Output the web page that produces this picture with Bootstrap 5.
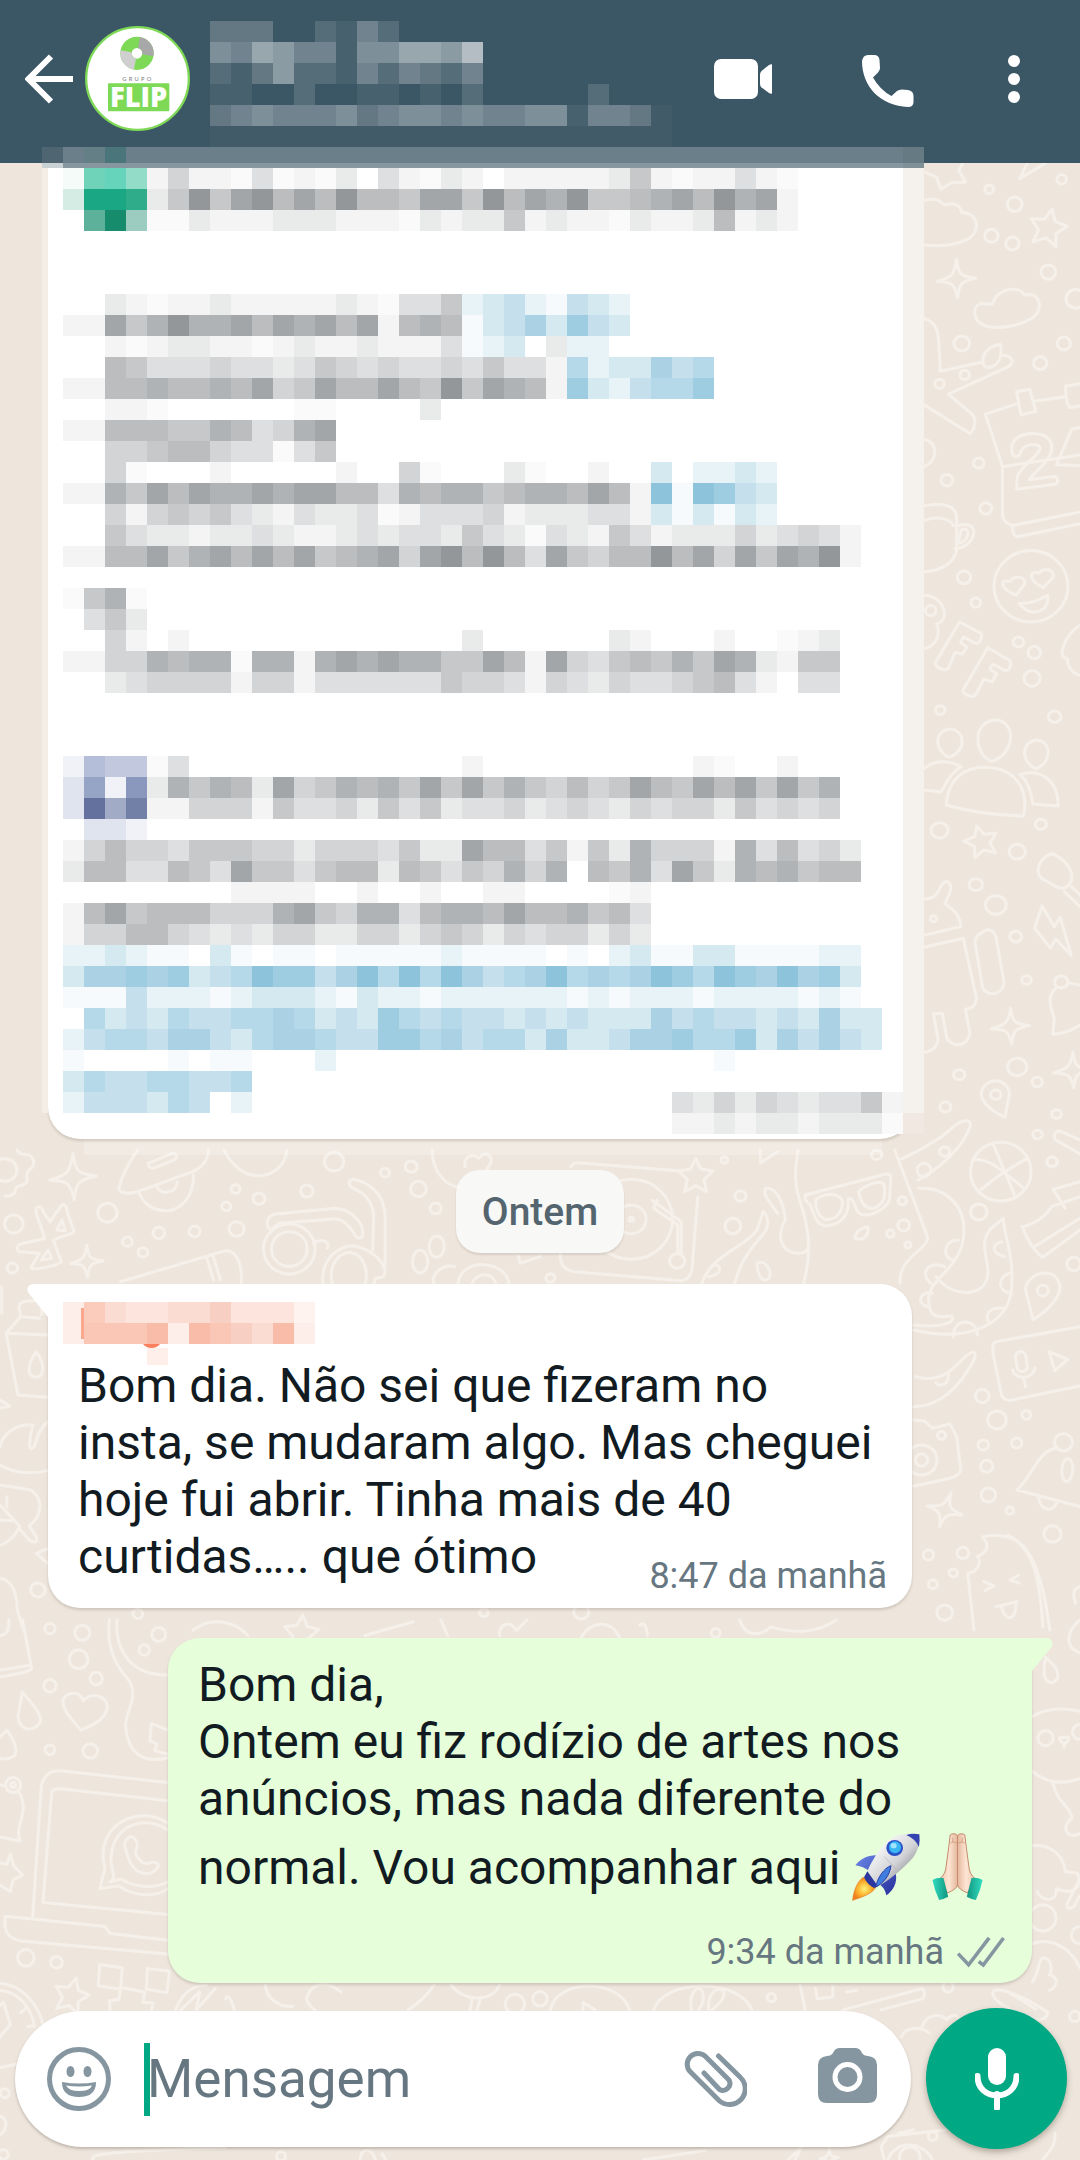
<!DOCTYPE html>
<html lang="pt-BR">
<head>
<meta charset="utf-8">
<meta name="viewport" content="width=device-width, initial-scale=1">
<title>Grupo Flip</title>
<link href="https://cdn.jsdelivr.net/npm/bootstrap@5.3.0/dist/css/bootstrap.min.css" rel="stylesheet">
<style>
  body{font-family:Roboto,"Noto Sans",sans-serif;background:#eee6dd;color:#111b21;position:relative;overflow-x:hidden}
  .wallpaper{position:absolute;inset:0;width:100%;height:100%;z-index:-1}
  .wallpaper g{fill:none;stroke:#f6f0ea;stroke-width:3px;stroke-linecap:round;stroke-linejoin:round}
  .wallpaper g *{vector-effect:non-scaling-stroke}
  .topbar{background:#3b5664;padding:26px 56px 32px 25px}
  .topbar .btn,.composer .btn{line-height:0;border:0}
  .topbar-actions{gap:90px}
  .title-block{margin:-5px 0 -16px 20px;width:462px}
  .avatar-btn{margin-left:12px}
  .thread{padding:0 48px 25px}
  .bubble{position:relative;width:864px;max-width:100%;border-radius:32px;box-shadow:0 2px 3px rgba(60,45,30,.18);font-size:48px;line-height:57px}
  .bubble-in{background:#fff;padding:18px 25px 12px 30px}
  .bubble-out{background:#e6ffda;padding:18px 26px 11px 30px}
  .bubble-forward{padding:0 0 5px;border-top-left-radius:0;border-top-right-radius:0}
  .tail-left{border-top-left-radius:0}
  .tail-right{border-top-right-radius:0}
  .tail{position:absolute;top:0}
  .tail-left .tail{left:-21px}
  .tail-right .tail{right:-21px}
  .long-text{width:882px;margin:-16px -12px 0 -6px;position:relative;z-index:1}
  .sender{margin:0 0 -8px -15px}
  .stamp{font-size:36px;line-height:40px;color:#667781}
  .stamp-inline{margin-top:-29px}
  .stamp-below{margin-top:31px;gap:12px}
  .emoji{vertical-align:-17px;margin-top:6px}
  .day-pill{background:#f8f8f7;color:#54656f;font-size:39px;line-height:47px;font-weight:500;border-radius:24px;padding:19px 26px 17px;margin:31px 0;box-shadow:0 2px 2px rgba(60,45,30,.12)}
  .reply-gap{margin-top:30px}
  .composer{padding:0 13px 11px 15px;gap:15px}
  .field{height:136px;border-radius:68px;background:#fff;padding:0 34px 0 32px;box-shadow:0 2px 3px rgba(60,45,30,.25)}
  .field input{font-size:53px;line-height:64px;color:#111b21;caret-color:#00a884}
  .field input::placeholder{color:#667781;opacity:1}
  .input-wrap{position:relative;margin-left:36px}
  .caret{position:absolute;left:-3px;top:-4px;width:6px;height:73px;background:#00a884}
  .clip-btn{margin-right:71px}
  .mic-btn{width:141px;height:141px;background:#00a884;box-shadow:0 3px 6px rgba(60,45,30,.35)}
  .mic-btn:hover{background:#00a884}
</style>
<script src="https://cdn.jsdelivr.net/npm/bootstrap@5.3.0/dist/js/bootstrap.bundle.min.js"></script>
</head>
<body class="d-flex flex-column min-vh-100">

<svg class="wallpaper" viewBox="0 0 1080 2160" preserveAspectRatio="xMidYMin slice" aria-hidden="true">
  <defs>
    <path id="star" vector-effect="non-scaling-stroke" d="M0-50L15-18 50-12 24 14 32 50 0 32-32 50-24 14-50-12-15-18Z"/>
    <path id="spark" vector-effect="non-scaling-stroke" d="M0-55C5-12 12-8 52-3 12 6 6 12 3 52-6 14-10 8-52 6-10-6-6-14 0-55Z"/>
  </defs>
  <g transform="translate(500 140) scale(.37 .357)">
    <path d="M1150 90L1180 105 1192 138 1220 120 1258 118 1240 85 1262 45M1405 108L1425 65M1405 108L1490 55M1146 170C1175 160 1190 168 1200 182 1235 170 1245 190 1248 203 1300 205 1300 265 1255 282 1220 298 1180 298 1146 294"/>
    <use href="#star" transform="translate(1482 243) rotate(12)"/><use href="#spark" transform="translate(1234 390)"/>
    <path d="M1330 460C1345 415 1400 405 1418 435 1455 425 1465 460 1452 485 1430 515 1350 535 1310 520 1275 505 1275 460 1305 458ZM1146 500C1180 510 1185 540 1186 570L1190 648 1306 622C1300 595 1330 575 1352 572 1360 610 1345 630 1325 637 1308 638 1305 630 1306 622M1352 604C1385 600 1395 625 1370 637L1212 712 1278 770C1290 790 1280 815 1270 822L1146 742M1312 768L1395 740M1448 731L1528 719M1568 745L1540 750C1528 740 1530 700 1528 690L1568 682M1312 768L1358 915V1050C1360 1070 1375 1078 1390 1080M1358 915L1568 882M1385 1080L1568 1042M1385 1080C1385 1100 1390 1115 1405 1110L1568 1075M1396 705L1432 698 1448 760 1408 770Z"/>
    <path d="M1385 880C1375 840 1405 822 1440 822 1480 822 1500 845 1488 880 1478 905 1450 925 1430 952L1500 942C1510 950 1510 960 1500 964L1396 978 1398 945C1405 915 1450 890 1460 865 1460 845 1410 850 1405 880 1400 890 1388 888 1385 880ZM1568 805L1545 810 1504 910 1568 912M1146 1025C1200 1012 1240 1025 1234 1070V1150C1225 1190 1190 1205 1146 1210M1146 1065C1190 1050 1220 1065 1225 1080M1240 1080C1300 1060 1290 1140 1230 1145M1246 1092C1275 1080 1270 1125 1238 1130ZM1146 838C1185 845 1185 900 1146 915"/>
    <circle cx="1435" cy="1250" r="100"/><path d="M1395 1275C1350 1255 1350 1230 1378 1236 1385 1220 1425 1220 1417 1245ZM1468 1254C1425 1230 1430 1205 1457 1213 1465 1198 1500 1200 1495 1225ZM1402 1298Q1440 1300 1480 1275C1485 1310 1460 1325 1435 1322 1420 1318 1410 1305 1402 1298ZM1242 1350L1300 1382C1305 1395 1295 1412 1285 1410L1252 1392 1245 1408 1262 1420 1250 1440 1230 1435 1212 1480C1200 1490 1175 1475 1176 1465ZM1318 1422L1378 1458C1384 1475 1375 1488 1365 1486L1332 1468 1324 1482 1342 1495 1330 1518 1308 1510 1285 1555C1270 1565 1250 1550 1252 1540ZM1146 1275C1200 1275 1220 1345 1180 1355 1195 1395 1170 1420 1146 1425M1568 1360C1540 1375 1515 1420 1520 1445L1535 1455C1530 1475 1550 1495 1568 1500"/>
    <circle cx="1391" cy="180" r="20"/><circle cx="1328" cy="268" r="18"/><circle cx="1385" cy="290" r="18"/><circle cx="1322" cy="138" r="12"/><circle cx="1518" cy="110" r="13"/><circle cx="1482" cy="370" r="20"/><circle cx="1556" cy="445" r="26"/><circle cx="1248" cy="570" r="21"/><circle cx="1524" cy="570" r="18"/><circle cx="1460" cy="625" r="18"/><circle cx="1188" cy="683" r="13"/><circle cx="1256" cy="658" r="13"/><circle cx="1294" cy="905" r="14"/><circle cx="1208" cy="953" r="16"/><circle cx="1313" cy="1032" r="16"/><circle cx="1254" cy="1225" r="18"/><circle cx="1286" cy="1296" r="13"/><circle cx="1401" cy="1406" r="14"/><circle cx="1444" cy="1436" r="17"/><circle cx="1438" cy="1508" r="22"/><circle cx="1164" cy="1318" r="14"/>
  </g>
  <g transform="translate(500 700) scale(.37 .3333)">
    <path d="M1338 60C1395 60 1395 160 1330 184 1280 165 1275 65 1338 60ZM1216 87C1260 90 1260 155 1214 172 1170 150 1175 90 1216 87ZM1450 120C1495 125 1490 190 1448 207 1405 180 1410 125 1450 120ZM1206 315C1210 240 1250 202 1312 202 1390 205 1430 260 1415 348Q1300 345 1206 315ZM1146 205C1180 175 1220 185 1246 200 1215 220 1205 255 1192 276L1146 270M1405 224C1460 205 1510 240 1508 318L1440 312C1435 270 1425 240 1405 224ZM1465 618L1445 685 1488 744 1502 717 1544 766 1514 652 1498 680ZM1300 700C1320 680 1338 690 1342 720L1362 845C1360 890 1310 890 1304 860L1284 730C1284 715 1290 705 1300 700ZM1146 597C1175 595 1180 585 1190 562 1205 530 1225 545 1215 580L1202 612C1230 630 1245 655 1245 680L1146 706M1146 742L1252 715 1288 895C1285 920 1275 925 1258 928L1270 1000C1260 1050 1210 1040 1206 1005L1196 940 1172 942 1184 1020C1180 1045 1165 1055 1146 1056M1490 460C1450 480 1440 530 1480 545 1515 570 1530 575 1545 540 1550 500 1515 470 1490 460ZM1525 575L1568 620M1545 560L1568 585"/>
    <circle cx="1517" cy="846" r="18"/><path d="M1502 865C1475 890 1490 925 1498 955L1494 1002C1520 1005 1545 990 1568 975M1534 848L1568 855"/>
    <use href="#spark" transform="translate(1380 980)"/><use href="#spark" transform="translate(1548 1112)"/><use href="#star" transform="translate(1300 422) rotate(-15) scale(.9)"/>
    <path d="M1365 1252C1320 1230 1300 1200 1300 1180 1310 1130 1370 1130 1377 1180ZM1080 1380C1140 1350 1200 1310 1225 1280 1250 1260 1270 1255 1272 1275 1250 1350 1180 1410 1130 1440M1510 1292L1568 1320M1510 1292C1495 1300 1495 1315 1505 1322L1568 1362"/>
    <circle cx="1340" cy="1184" r="14"/><circle cx="1188" cy="391" r="23"/><circle cx="1398" cy="455" r="22"/><circle cx="1462" cy="373" r="15"/><circle cx="1286" cy="554" r="18"/><circle cx="1340" cy="615" r="28"/><circle cx="1394" cy="710" r="16"/><circle cx="1172" cy="656" r="9"/><circle cx="1423" cy="840" r="13"/><circle cx="1398" cy="1101" r="26"/><circle cx="1241" cy="1124" r="15"/><circle cx="1452" cy="1146" r="14"/><circle cx="1204" cy="1221" r="15"/><circle cx="1504" cy="1242" r="13"/><circle cx="1453" cy="1304" r="13"/><circle cx="1190" cy="30" r="13"/><circle cx="1499" cy="50" r="17"/><circle cx="1492" cy="1385" r="14"/><circle cx="1202" cy="1355" r="14"/><circle cx="1018" cy="1365" r="14"/>
  </g>
  <g transform="translate(0 1150) scale(.3444 .3333)">
    <circle cx="15" cy="60" r="34"/><path d="M50 0C60 20 75 10 85 15 100 25 105 45 85 60 70 70 85 95 75 100 60 110 45 105 45 120 45 135 25 140 15 138"/>
    <use href="#spark" transform="translate(212 82) scale(1.3)"/><use href="#spark" transform="translate(252 335) scale(.9)"/>
    <path d="M345 115C355 70 385 20 400 0M345 115C350 135 375 130 400 125L560 65C590 50 605 25 605 0M430 40L500 10C515 10 515 25 505 30L445 55C432 55 430 45 430 40ZM405 130C430 205 560 210 562 75M455 110C465 135 510 135 515 95M650 0C670 40 700 75 750 78 800 75 830 40 833 0M1255 0C1255 60 1290 110 1340 112M1350 50C1345 15 1380 10 1390 25 1410 0 1430 15 1425 40L1395 85"/>
    <path d="M105 175C115 165 125 175 125 185L145 215 180 165C190 160 195 175 195 185L215 245C210 255 195 250 155 270L178 335C170 345 95 365 90 352L115 310 55 305C45 295 50 285 60 282L130 265 105 190ZM165 240L180 210 190 242ZM120 330L140 300 150 325Z"/>
    <circle cx="840" cy="297" r="75"/><circle cx="840" cy="297" r="52"/><path d="M910 280C940 260 960 280 950 295M938 402C930 330 980 290 1020 287 1070 290 1110 330 1118 360 1120 385 1105 382 1090 385L1085 402M965 402C950 340 990 305 1020 308 1060 315 1070 370 1060 402M780 235C770 215 780 195 800 192L975 175C1030 180 1060 230 1052 258 1045 270 1030 262 1028 250 1010 220 990 205 970 207L810 220 785 240M1082 300L1085 190C1075 140 1050 125 1020 112 1005 95 1020 85 1035 90 1090 105 1118 150 1118 200V350M350 395L655 302C690 300 705 350 700 402M600 322L620 390M618 315L640 390"/>
    <ellipse cx="1268" cy="290" rx="22" ry="32"/><ellipse cx="1220" cy="335" rx="22" ry="34"/><path d="M1260 400C1250 370 1290 340 1320 350M1330 400C1340 320 1470 330 1478 402M1370 402C1385 365 1430 365 1440 402M1505 318L1510 340 1568 320"/>
    <path d="M0 410L5 415V490M60 500L55 470C60 450 75 455 100 452L115 455C120 470 125 485 120 495M60 500L18 550 52 735 139 742M60 500L115 505M18 550L139 555M105 605C75 650 80 680 105 682 130 680 130 640 105 605ZM0 750L28 768 0 775M139 815C120 830 110 850 100 890 85 905 80 895 95 825 40 820 5 860 0 890M0 945C30 965 80 975 139 962M0 1005L90 1020C130 1050 120 1100 85 1128L105 1160C110 1178 100 1180 85 1170L55 1135C40 1165 10 1185 0 1185M0 1065L58 1130M0 1110L35 1112M20 1070V1040M139 1195L105 1210 139 1240M0 1285C40 1290 50 1340 50 1380L68 1440"/>
    <circle cx="312" cy="188" r="28"/><circle cx="40" cy="222" r="27"/><circle cx="36" cy="354" r="15"/><circle cx="370" cy="275" r="14"/><circle cx="415" cy="307" r="14"/><circle cx="461" cy="249" r="17"/><circle cx="565" cy="244" r="16"/><circle cx="687" cy="237" r="22"/><circle cx="657" cy="169" r="13"/><circle cx="684" cy="117" r="13"/><circle cx="752" cy="146" r="17"/><circle cx="891" cy="123" r="18"/><circle cx="970" cy="35" r="28"/><circle cx="1118" cy="68" r="13"/><circle cx="1194" cy="50" r="17"/><circle cx="1215" cy="117" r="23"/><circle cx="1265" cy="175" r="16"/><circle cx="110" cy="1320" r="21"/><circle cx="400" cy="1392" r="14"/><circle cx="1405" cy="1388" r="12"/>
  </g>
  <g transform="translate(540 1150) scale(.3444 .3333)">
    <path d="M60 310C55 340 70 360 100 365L410 392C430 390 440 375 442 350L458 140M90 50C95 35 110 38 130 40L400 62M640 0V38L690 5M750 0C740 60 735 100 760 170 785 250 785 330 765 400M470 400C500 310 600 290 630 240L648 185C665 200 665 230 650 250 590 320 580 350 565 400M655 115C690 110 710 170 712 210 680 270 710 320 765 308 785 300 780 280 778 260M655 115C645 135 670 160 690 190M630 340C660 325 680 380 660 388 640 400 630 360 630 340M500 345C530 340 530 375 490 380"/>
    <circle cx="265" cy="208" r="120"/><circle cx="265" cy="208" r="43"/><circle cx="265" cy="208" r="6"/><circle cx="398" cy="333" r="22"/><path d="M325 150L410 215V310M340 150L330 175 400 225V310"/><use href="#star" transform="translate(452 75)"/>
    <path d="M770 135L1005 72C1020 70 1020 80 1018 90L1015 150C1005 180 930 220 918 175 905 135 890 140 895 160 895 200 870 225 830 228 800 225 795 190 785 165L770 150ZM800 150C830 125 880 130 878 160 875 200 850 210 825 208 805 195 800 170 800 150ZM925 125C950 100 1000 85 1000 110 1003 140 1000 160 970 175 940 180 930 150 925 125ZM915 265C915 245 935 230 953 232 955 255 940 275 915 265Z"/>
    <circle cx="1338" cy="65" r="88"/><path d="M1255 30C1300 20 1340 60 1405 115M1280 120Q1320 80 1415 25M1315 -20L1380 140"/>
    <path d="M1030 0L1125 260C1130 300 1040 320 1045 400M1100 115C1180 110 1240 170 1230 260 1220 360 1130 380 1128 450 1130 500 1150 505 1195 498 1210 515 1170 535 1085 525M1150 380C1200 450 1300 440 1300 370 1305 330 1270 280 1310 235L1345 205C1345 250 1380 320 1368 430 1350 520 1250 580 1085 540M1175 350C1130 330 1100 370 1135 400M1215 270C1180 265 1160 320 1200 330M1340 275C1310 285 1310 310 1350 320M1365 370C1330 375 1325 425 1368 430M1345 475C1300 470 1290 500 1305 520M1200 560C1200 500 1270 505 1270 555M1140 430C1105 420 1090 460 1125 470M1568 95L1490 118 1525 175M1400 230C1430 225 1470 200 1485 170L1568 140M1400 230C1420 280 1440 310 1460 322L1568 240M1435 290L1568 205M1510 410C1500 340 1410 370 1410 420L1432 510C1460 490 1510 450 1510 410ZM1568 530L1325 575C1310 580 1315 600 1316 615L1340 735C1345 750 1360 752 1370 750L1568 708M1090 680C1150 700 1190 670 1230 625 1260 595 1270 605 1260 630 1220 710 1160 770 1085 770M1150 698C1160 715 1190 700 1185 672"/>
    <circle cx="1460" cy="422" r="16"/><rect x="1383" y="605" width="30" height="60" rx="15" transform="rotate(-8 1398 635)"/><path d="M1372 660C1380 690 1430 690 1437 655M1405 685L1410 710M1478 605L1532 628 1495 662Z"/>
    <path d="M1085 810L1115 812 1140 835 1190 822 1210 860 1222 960C1215 985 1190 985 1085 1008"/><circle cx="1108" cy="930" r="45"/><circle cx="1108" cy="930" r="18"/><circle cx="1166" cy="856" r="12"/>
    <circle cx="1520" cy="877" r="26"/><path d="M1495 895C1440 910 1430 980 1385 1020L1568 1070M1530 925C1510 940 1510 990 1530 995 1550 985 1555 930 1530 925ZM1448 1045C1455 1085 1490 1085 1500 1060M1242 1270C1270 1270 1285 1230 1270 1220 1310 1200 1300 1180 1285 1160 1400 1140 1450 1200 1480 1440M1242 1270L1260 1440M1360 1155C1420 1190 1450 1250 1460 1430M1288 1295L1318 1308 1292 1322M1390 1275L1365 1290 1392 1300M1325 1370L1385 1355M1340 1370C1350 1420 1385 1410 1382 1360M1568 1310C1550 1315 1545 1330 1555 1360"/>
    <use href="#spark" transform="translate(1175 1080) rotate(20)"/>
    <circle cx="582" cy="138" r="16"/><circle cx="560" cy="228" r="23"/><circle cx="535" cy="30" r="10"/><circle cx="1052" cy="152" r="12"/><circle cx="1056" cy="226" r="17"/><circle cx="1017" cy="251" r="11"/><circle cx="1068" cy="285" r="9"/><circle cx="1274" cy="186" r="24"/><circle cx="1487" cy="36" r="15"/><circle cx="1115" cy="60" r="20"/><circle cx="1550" cy="342" r="20"/><circle cx="1284" cy="738" r="20"/><circle cx="1327" cy="810" r="27"/><circle cx="1412" cy="795" r="13"/><circle cx="1287" cy="885" r="15"/><circle cx="1384" cy="879" r="15"/><circle cx="1297" cy="949" r="18"/><circle cx="1302" cy="1035" r="21"/><circle cx="1364" cy="1082" r="11"/><circle cx="1488" cy="1152" r="25"/><circle cx="1128" cy="1215" r="15"/><circle cx="1228" cy="1209" r="17"/><circle cx="1200" cy="1269" r="12"/><circle cx="1141" cy="1303" r="13"/><circle cx="1175" cy="1388" r="23"/><circle cx="30" cy="384" r="13"/><circle cx="120" cy="1385" r="22"/>
  </g>
  <g transform="translate(0 1620) scale(.3444)">
    <path d="M65 0L92 140C90 150 60 155 0 165M0 145L85 132M0 45C15 45 30 30 25 0M65 210C110 260 130 290 110 305 80 330 55 310 52 280ZM20 320C50 360 55 395 30 400 15 405 5 405 0 400M0 340L20 320M235 320C210 290 180 260 183 235 190 205 235 205 242 235 260 210 305 215 312 250 308 290 270 305 235 320ZM318 0C310 60 325 120 370 170 410 220 360 270 365 310 370 380 410 420 488 400M340 0C335 50 350 160 488 160M488 320L440 300 435 350 455 360 450 380 488 390M560 30C610 -10 680 0 720 45"/>
    <path d="M95 860L120 480C130 445 150 435 175 438L488 472M125 820L150 500C155 490 165 490 175 490L488 525M125 820L488 855M15 860L95 868 305 890 320 910 488 930M15 860C10 900 20 925 60 932L488 970M290 780L305 720C270 600 400 530 488 590M290 780L345 772C400 810 460 800 488 780M320 760C350 740 300 720 335 640 360 590 430 570 488 610M320 760L350 752C400 780 450 780 488 760M365 665C355 640 380 615 395 640 410 665 375 670 410 700 430 720 440 690 460 710 455 740 420 740 400 730 380 715 370 690 365 665Z"/>
    <circle cx="38" cy="479" r="22"/><circle cx="38" cy="479" r="7"/><path d="M0 478L16 482M55 500C90 560 40 590 58 642L0 630M0 705L20 710 30 680 40 715 65 740 38 755 30 788 0 770"/>
    <path d="M290 1000L355 1010 350 1072 285 1062ZM428 1012L492 1020 485 1082 425 1072ZM355 1068L420 1080 415 1110 445 1112 440 1132M350 1072L345 1102 318 1105 320 1132M510 1132C530 1080 560 1060 600 1060M525 1132L580 1080 570 1132 625 1070M655 1100C660 1085 670 1095 680 1132M770 1060C775 1100 810 1125 850 1122M890 1100C900 1060 940 1040 990 1080M890 1100C895 1120 905 1125 915 1132M1185 1132C1220 1110 1240 1090 1260 1060M1310 1060C1350 1110 1430 1110 1450 1060M1365 1132L1370 1105M1385 1132L1395 1100"/>
    <use href="#star" transform="translate(208 1088) rotate(15)"/><use href="#star" transform="translate(875 35) rotate(5)"/>
    <path d="M0 1055C60 1060 110 1110 125 1175M0 1075C50 1080 90 1120 100 1180M0 1120L10 1110 30 1175 0 1210M60 1140L75 1128M80 1180L100 1178M0 1300L45 1290M1060 45L1200 5M1280 0L1300 45M1450 45C1450 10 1480 0 1500 30L1530 0M270 1568C260 1550 290 1545 655 1532M1045 1568C1050 1530 1080 1530 1090 1568M1110 1550L1120 1568M0 1440C25 1450 20 1480 0 1495"/>
    <circle cx="145" cy="25" r="15"/><circle cx="239" cy="37" r="22"/><circle cx="228" cy="114" r="27"/><circle cx="279" cy="170" r="18"/><circle cx="145" cy="191" r="18"/><circle cx="461" cy="42" r="20"/><circle cx="419" cy="87" r="15"/><circle cx="145" cy="377" r="14"/><circle cx="262" cy="380" r="21"/><circle cx="75" cy="981" r="24"/><circle cx="164" cy="994" r="17"/><circle cx="1495" cy="1115" r="28"/><circle cx="14" cy="1374" r="13"/><circle cx="816" cy="1557" r="13"/><circle cx="10" cy="1552" r="14"/>
  </g>
  <g transform="translate(540 1620) scale(.3444)">
    <path d="M120 50C150 0 210 0 230 50M290 15C300 5 308 12 312 45M580 0C600 60 650 40 670 20 740 40 800 40 860 0M1568 0C1530 30 1520 80 1568 95M1468 108C1460 150 1460 180 1485 182 1515 175 1505 140 1480 120ZM1430 280C1470 255 1520 255 1568 265M1430 440C1480 480 1530 475 1568 460M1490 475C1500 530 1540 540 1545 575 1510 600 1530 640 1568 620M1430 655C1480 650 1520 680 1525 730L1560 735C1580 780 1540 800 1500 780 1500 830 1450 810 1445 790M1568 750L1530 825C1530 840 1540 840 1550 832L1568 800M1430 940C1480 920 1540 950 1568 1010M1430 1050C1450 1020 1445 1000 1455 985 1480 970 1490 1010 1480 1030 1510 1040 1500 1065 1480 1075M1315 1080C1330 1060 1420 1100 1475 1140 1470 1160 1450 1165 1430 1155 1350 1130 1310 1100 1315 1080ZM1360 1080L1440 1130"/>
    <path d="M30 1132C50 1040 230 1040 260 1132M125 1132V1110L160 1132M330 1132C360 1040 580 1040 615 1132M440 1132C430 1080 460 1060 470 1075 480 1100 470 1120 460 1132M490 1132C485 1080 520 1060 535 1080 535 1110 510 1120 500 1132M755 1060L770 1132M800 1070L805 1100 850 1095 850 1065M890 1080L920 1075M880 1132L1110 1070C1120 1080 1118 1090 1110 1100L990 1132M1050 1210C1060 1180 1110 1180 1130 1200M1110 1180C1120 1145 1160 1140 1180 1160 1200 1140 1215 1150 1215 1160M1000 1568L990 1530 1010 1500 1180 1480M1010 1568C1030 1510 1110 1510 1140 1568M1040 1490L1085 1480M1495 1490C1500 1530 1470 1550 1460 1568M300 1568L480 1540M720 1568L760 1530 740 1568"/>
    <use href="#spark" transform="translate(840 1562) scale(.5)"/><circle cx="1468" cy="343" r="22"/><circle cx="1568" cy="325" r="22"/><path d="M1522 360C1500 345 1508 335 1522 342 1535 335 1545 345 1522 360V370"/>
    <circle cx="510" cy="38" r="13"/><circle cx="672" cy="1096" r="12"/><circle cx="1460" cy="865" r="38"/><circle cx="1568" cy="915" r="25"/><circle cx="1553" cy="1151" r="15"/><circle cx="1185" cy="1065" r="15"/><circle cx="0" cy="1100" r="21"/><circle cx="1140" cy="1498" r="13"/><circle cx="1074" cy="1560" r="30"/>
  </g>
  <path fill="#fff" fill-opacity=".2" d="M84 1139h798v16H84z"/>
</svg>

<header class="topbar d-flex align-items-center">
  <button type="button" class="btn p-0" aria-label="Voltar">
    <svg width="48" height="50" viewBox="0 0 48 50" fill="none" stroke="#fff" stroke-width="6"><path d="M26 2.500L3.500 25 26 47.500M3 25H48"/></svg>
  </button>
  <button type="button" class="btn p-0 avatar-btn" aria-label="Grupo Flip">
    <svg width="105" height="105" viewBox="45 47 315 315">
      <circle cx="202.500" cy="204.500" r="154" fill="#fff" stroke="#7ed957" stroke-width="7"/>
      <g fill="none" stroke-width="34">
        <circle cx="201" cy="129" r="33" stroke="#7ed957"/>
        <path d="M195 161.500A33 33 0 0 1 168.500 123" stroke="#cfcfcf"/>
        <path d="M207 96.500A33 33 0 0 1 233.500 135" stroke="#a8a8a8"/>
      </g>
      <text x="204" y="213" text-anchor="middle" font-family="Lato,sans-serif" font-size="17" fill="#777" letter-spacing="7">GRUPO</text>
      <rect x="114" y="219" width="184" height="84" rx="3" fill="#7ed957"/>
      <text x="206" y="291" text-anchor="middle" font-family="Open Sans,sans-serif" font-weight="800" font-size="82" fill="#fff">FLIP</text>
    </svg>
  </button>
  <svg class="title-block flex-shrink-0" height="126" viewBox="0 0 462 126" shape-rendering="crispEdges" id="titleBlock" aria-hidden="true"></svg>
  <div class="topbar-actions d-flex align-items-center ms-auto">
    <button type="button" class="btn p-0" aria-label="Chamada de vídeo">
      <svg width="60" height="44" viewBox="0 0 60 44" fill="#fff"><rect x="2" y="2" width="44" height="40" rx="7"/><path d="M48 17.500Q48 15.500 49.500 14L57 8Q61 6 61 10V34Q61 38 57 36L49.500 30.500Q48 29 48 27Z"/></svg>
    </button>
    <button type="button" class="btn p-0" aria-label="Ligar">
      <svg width="52" height="56" viewBox="0 0 52 56" fill="#fff"><path d="M6 4H12Q17 4 17.500 9L18 17Q18 19.500 16 21.500L11 26.500Q18 39 29.500 45L35 40Q37 38.500 40 38.500L46 39Q51.500 40 51.500 45V51Q51.500 56 46 56C19 55 0 36 0 10Q1 4 6 4Z"/></svg>
    </button>
    <button type="button" class="btn p-0" aria-label="Mais opções">
      <svg width="20" height="52" viewBox="0 0 20 52" fill="#fff"><circle cx="10" cy="8" r="6"/><circle cx="10" cy="26" r="6"/><circle cx="10" cy="44" r="6"/></svg>
    </button>
  </div>
</header>

<main class="thread flex-grow-1 d-flex flex-column">
  <article class="bubble bubble-in bubble-forward align-self-start">
    <svg class="long-text d-block" height="987" viewBox="42 147 882 987" shape-rendering="crispEdges" id="longText" aria-hidden="true"></svg>
  </article>

  <div class="day-pill align-self-center">Ontem</div>

  <article class="bubble bubble-in tail-left align-self-start">
    <svg class="tail" width="22" height="34" viewBox="0 0 22 34" fill="#fff"><path d="M22 0H6Q-2 2 1.500 9L21 33H22Z"/></svg>
    <svg class="sender d-block" width="252" height="63" viewBox="63 1302 252 63" id="sender" aria-hidden="true"></svg>
    <div>Bom dia. Não sei que fizeram no<br>insta, se mudaram algo. Mas cheguei<br>hoje fui abrir. Tinha mais de 40<br>curtidas….. que ótimo</div>
    <div class="stamp stamp-inline d-flex justify-content-end">8:47 da manhã</div>
  </article>

  <article class="bubble bubble-out tail-right align-self-end reply-gap">
    <svg class="tail" width="22" height="34" viewBox="0 0 22 34" fill="#e6ffda"><path d="M0 0H16Q24 2 20.500 9L1 33H0Z"/></svg>
    <div>Bom dia,<br>Ontem eu fiz rodízio de artes nos<br>anúncios, mas nada diferente do<br>normal. Vou acompanhar aqui
      <svg class="emoji" width="68" height="68" viewBox="94 70 204 204" role="img" aria-label="foguete">
        <defs>
          <linearGradient id="hull" x1="0" y1="0" x2="1" y2="1"><stop offset=".2" stop-color="#fafafa"/><stop offset=".55" stop-color="#d2d3d6"/><stop offset=".8" stop-color="#8d9096"/></linearGradient>
          <linearGradient id="fin" x1="0" y1="0" x2="1" y2="1"><stop offset="0" stop-color="#6a86e6"/><stop offset="1" stop-color="#262f9c"/></linearGradient>
          <radialGradient id="fire"><stop offset="0" stop-color="#fff27a"/><stop offset=".6" stop-color="#fdb12d"/><stop offset="1" stop-color="#f0801f"/></radialGradient>
          <linearGradient id="skin" x1="0" x2="1"><stop offset="0" stop-color="#eec6ad"/><stop offset=".5" stop-color="#fde6d4"/><stop offset="1" stop-color="#e5b89d"/></linearGradient>
          <linearGradient id="cuff" x1="0" x2="1"><stop offset="0" stop-color="#2fdcc0"/><stop offset="1" stop-color="#12957f"/></linearGradient>
        </defs>
        <path d="M96 272C98 245 110 215 128 203L166 232C155 252 125 262 96 272Z" fill="url(#fire)" stroke="#e57a26" stroke-width="2"/>
        <path d="M104 167C120 145 150 132 180 138L146 184C132 174 118 169 104 167ZM225 190C232 220 215 245 197 257 194 242 188 232 178 225Z" fill="url(#fin)"/>
        <path d="M140 185C162 135 200 80 240 75 265 71 280 72 296 74 298 100 292 130 270 152 240 185 200 215 172 230Z" fill="url(#hull)"/>
        <path d="M140 185L172 230 160 235Q140 225 130 203Z" fill="#2b369f"/>
        <path d="M257 76Q275 70 296 74 298 92 295 112 285 88 257 76Z" fill="#3343b0"/>
        <path d="M165 232C170 205 190 175 211 168 208 195 190 220 165 232Z" fill="#3e7ddd" stroke="#2c3ea8" stroke-width="3"/>
        <ellipse cx="222" cy="115" rx="25" ry="24" fill="#2b51c7"/><ellipse cx="223" cy="113" rx="18" ry="18" fill="#38b6f5"/><ellipse cx="219" cy="108" rx="9" ry="8" fill="#a1e4ff"/>
        <path d="M190 140L226 178" stroke="#b2b4b8" stroke-width="2"/>
      </svg>
      <svg class="emoji" width="51" height="68" viewBox="336 70 152 204" role="img" aria-label="mãos juntas">
        <g id="palm"><path d="M412 78C408 71 396 71 390 76L386 110 378 170Q376 194 360 206L382 250Q410 238 412 226Z" fill="url(#skin)" stroke="#c48b6d" stroke-width="3"/><path d="M391 100Q400 94 409 100M398 84V97" fill="none" stroke="#c48b6d" stroke-width="2"/><path d="M337 211Q350 203 370 205L384 261Q370 269 357 271 343 243 337 211Z" fill="url(#cuff)"/></g>
        <use href="#palm" transform="matrix(-1 0 0 1 824 0)"/>
      </svg>
    </div>
    <div class="stamp stamp-below d-flex justify-content-end align-items-center">9:34 da manhã
      <svg width="50" height="32" viewBox="408 368 150 98" fill="none" stroke="#8696a0" stroke-width="11" role="img" aria-label="Entregue"><path d="M413 422L445 456 508 374M476 446L490 457 552 374"/></svg>
    </div>
  </article>
</main>

<form class="composer d-flex align-items-center">
  <div class="field d-flex align-items-center flex-grow-1">
    <button type="button" class="btn p-0" aria-label="Emojis">
      <svg width="64" height="64" viewBox="0 0 64 64"><circle cx="32" cy="32" r="29.500" fill="none" stroke="#8696a0" stroke-width="5"/><g fill="#8696a0"><ellipse cx="23.500" cy="24.500" rx="4" ry="5.500"/><ellipse cx="40.500" cy="24.500" rx="4" ry="5.500"/><path d="M15 35Q32 38 49 35 49 50 32 50 15 50 15 35Z"/></g><path d="M19 38.500Q32 40.500 45 38.500 43 44 32 44 22 44 19 38.500Z" fill="#fff"/></svg>
    </button>
    <div class="input-wrap flex-grow-1">
      <input type="text" class="w-100 border-0 p-0 bg-transparent d-block" placeholder="Mensagem" aria-label="Mensagem">
      <span class="caret"></span>
    </div>
    <button type="button" class="btn p-0 clip-btn" aria-label="Anexar">
      <svg width="63" height="58" viewBox="0 0 63 58" fill="none" stroke="#8696a0" stroke-width="5" stroke-linecap="round"><path d="M34.500 6L56 27A14.500 14.500 0 0 1 35 50.500L6.500 22A10.500 10.500 0 0 1 21.500 6.500L45 30A7 7 0 0 1 35.500 39.500L20 23"/></svg>
    </button>
    <button type="button" class="btn p-0" aria-label="Câmera">
      <svg width="59" height="62" viewBox="0 0 59 62"><path fill="#8696a0" d="M22 0H37Q42 0 44 5 46 8 50 8 59 9 59 17V46Q59 55 50 55H9Q0 55 0 46V17Q0 9 9 8 13 8 15 5 17 0 22 0Z"/><circle cx="29.500" cy="29" r="12.500" fill="#8696a0" stroke="#fff" stroke-width="5"/></svg>
    </button>
  </div>
  <button type="submit" class="btn p-0 rounded-circle mic-btn flex-shrink-0" aria-label="Gravar áudio">
    <svg width="44" height="62" viewBox="0 0 44 62"><rect x="13" y="0" width="18" height="37" rx="9" fill="#fff"/><path d="M2.500 28C2.500 54 41.500 54 41.500 28M22 46V60" fill="none" stroke="#fff" stroke-width="6" stroke-linecap="round"/></svg>
  </button>
</form>

<script>
  const CELL = 21;
  const palette = {
    a:'#fafafa', b:'#f4f4f5', c:'#e9eaea', d:'#dedfe0', e:'#d3d4d5', f:'#c6c8c9', g:'#bbbdbe', h:'#b0b3b5', i:'#a3a6a8', j:'#93979a',
    A:'#f6fafd', B:'#e8f3f8', C:'#d5e9f1', D:'#c5e0ec', E:'#b6d9e9', F:'#aad2e4', G:'#9ecce0', H:'#8ec4db',
    k:'#f0f2f8', l:'#b4bed9', m:'#c2c9df', n:'#e0e4ee', o:'#96a4c6', p:'#8a98be', q:'#64719f', r:'#a2abc6', s:'#7280a8',
    1:'#f5fbf8', 2:'#6ed3b8', 3:'#66d4bb', 4:'#93dcc8', 5:'#d4ece3', 6:'#19a883', 7:'#2fad8b', 8:'#5db09a', 9:'#178c6c', 0:'#9bccbf'
  };
  const rect = (x, y, w, h, fill) => `<rect x="${x}" y="${y}" width="${w}" height="${h}" fill="${fill}"/>`;
  function cells(lines, x0, y0, colour) {
    return lines.map((line, r) => [...line].map((c, i) => c === '.' ? '' :
      rect(x0 + i * CELL, y0 + r * CELL, CELL, CELL, colour(c))).join('')).join('');
  }

  const body = [
    '1234bebbadabac.dbacb.bbbbbcfbabbdba',
    '5667cfjfijgigjggfiifjgihjffghigjhib',
    '.890aacbbbcccbbbacbccfbcbbacbbcgbcb',
    '', '', '',
    '..cbabbcbbbbbcbaddfBCDBADCB',
    'bbifhjhhigihigibghgACDFCGDC',
    '..babccbbabcbbcbbbdABC.cBB',
    '..gfdddeddcdfededdedfddbEBCCFDE',
    'bbgghgghgiefiggigfjfihgbGCBDEEG',
    '..bba......aa....c',
    'bbgggffhgdehi',
    '..eefggeddadf',
    '..ea...b.....b..ea...ca..b..C.BBCB',
    'bbhfigihhihiiggdhghhfghhgigbHAHGDC',
    '..ebefefdcbdccdabdddebcccddbCACACB',
    '..fdccbccdcbbcdcddcfdcadcbfdbcccecdedb',
    'bbggifhigigifghieijgjgdifeggjgieifihjb',
    '',
    'afha',
    '.dfc',
    '..eb.b.............c......cb...b..abc',
    'bbeehghhahhbhihihhffigbiedfgfhfihcbff',
    '..cdeeeebeebddddddfeedbedceddefgdb.dd',
    '', '', '',
    'klmmad.............b..........ba..b',
    'nokpchfhgciefhghfififhfegefigfigififh',
    'nqrsbbeeebfddecfdfcddecdedcedeecfdede',
    '.nnk',
    'begeedfffeeceeedfcciggdfbfcheeebhdgdec',
    'cggddgfdiffdfggcgfdfeheh.gfhdifchghfgg',
    '........bbbb..b..b..bb....ab',
    'bgifgggeeehifehhdghhgigghfgd',
    'beeggedcdceecceecefecedeecec',
    'BBCBAA.CA.AA.AAAAABAAAA.A.BCAACCAAAABB',
    'CFFGFGCDEHGGDFHEHEHFDEFHEFEFHGEHGFHFGC',
    'AAADBBBABCCCBACBBABBBBBBABABBBABBBBABA',
    '.ECDCEDDEEFECDCGEDEDDCDCDCCCFDEDDCDCFCC',
    'BDEEDFFDCEFFEDDGGEFDEECFCCDFFGEEGCFDFDC',
    'A....A.AA...B..................A',
    'CEDDEEDDE',
    'BDDDCED.B....................dcecedcddfb',
    '.............................bbcbccbccca'
  ];
  document.getElementById('longText').innerHTML =
    rect(42, 147, 21, 16, '#4f6672') + rect(63, 147, 840, 16, '#6a7f89') + rect(84, 147, 21, 16, '#657f87') + rect(105, 147, 21, 16, '#4a757a') +
    rect(903, 147, 21, 16, '#657a83') + rect(42, 163, 21, 5, '#c9d1d4') + rect(63, 163, 840, 5, '#87979f') + rect(903, 163, 21, 5, '#7f9096') +
    rect(42, 168, 6, 945, '#f4eee7') + rect(903, 168, 21, 945, '#f5f1ed') + rect(903, 1113, 21, 21, '#f0e8e1') +
    cells(body, 63, 168, c => palette[c]);

  const title = [
    '333..2142',
    '5476441557769',
    '2136221424324',
    '11..2..11.1.2.....2',
    '3454445345545445514430',
    '0000000000000000000000'
  ];
  document.getElementById('titleBlock').innerHTML =
    cells(title, 0, 0, c => `rgba(255,255,255,${c === '0' ? 0.03 : c * 0.068})`);

  const salmon = { 0:'#fdeeea', 1:'#fbcbbc', 2:'#fbdcd2', 3:'#fde4dc', 4:'#f8d0c3', 5:'#fff3f0', 6:'#fac6b6', 7:'#f9bca9' };
  document.getElementById('sender').innerHTML =
    '<path d="M143 1344h17q-3 4-8.500 4t-8.500-4z" fill="#fc7f5e"/>' +
    cells(['012332243335', '066670764270'], 63, 1302, c => salmon[c]) +
    rect(81, 1308, 3, 31, '#fba78e') + rect(147, 1348, 21, 17, '#feefeb');
</script>
</body>
</html>
